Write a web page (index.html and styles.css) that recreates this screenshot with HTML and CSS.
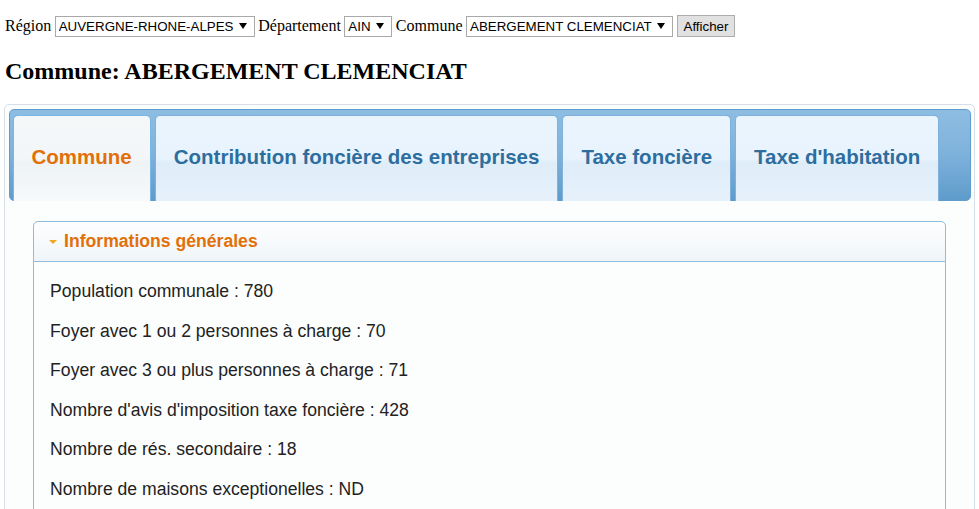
FILE: index.html
```html
<!DOCTYPE html>
<html lang="fr">
<head>
    <meta charset="UTF-8">
    <title>Fiscalité locale - Commune</title>
    <link rel="stylesheet" href="styles.css">
</head>
<body>

    <form class="filters">
        <label for="region">Région</label>
        <select id="region"><option>AUVERGNE-RHONE-ALPES</option></select>
        <label for="dep">Département</label>
        <select id="dep"><option>AIN</option></select>
        <label for="commune">Commune</label>
        <select id="commune"><option>ABERGEMENT CLEMENCIAT</option></select>
        <button type="button">Afficher</button>
    </form>

    <h2>Commune: ABERGEMENT CLEMENCIAT</h2>

    <div class="tabs">
        <ul class="tabs-nav">
            <li class="tab active"><a href="#commune">Commune</a></li>
            <li class="tab"><a href="#cfe">Contribution foncière des entreprises</a></li>
            <li class="tab"><a href="#tf">Taxe foncière</a></li>
            <li class="tab"><a href="#th">Taxe d'habitation</a></li>
        </ul>

        <div class="tab-panel" id="commune">
            <div class="accordion">
                <h3 class="acc-header"><span class="acc-icon"></span>Informations générales</h3>
                <div class="acc-content">
                    <p>Population communale : 780</p>
                    <p>Foyer avec 1 ou 2 personnes à charge : 70</p>
                    <p>Foyer avec 3 ou plus personnes à charge : 71</p>
                    <p>Nombre d'avis d'imposition taxe foncière : 428</p>
                    <p>Nombre de rés. secondaire : 18</p>
                    <p>Nombre de maisons exceptionelles : ND</p>
                </div>
            </div>
        </div>
    </div>

</body>
</html>
```

FILE: styles.css
```css
body {
    margin: 4px;
    font-family: "Liberation Serif", "Times New Roman", serif;
    font-size: 16px;
    color: #000;
    background: #fff;
}
.filters {
    margin: 11px 0 0 1px;
    height: 22px;
    display: flex;
    align-items: center;
    gap: 3.5px;
}
.filters select {
    appearance: none;
    -webkit-appearance: none;
    font-family: "Liberation Sans", Arial, sans-serif;
    font-size: 13.33px;
    color: #000;
    height: 21px;
    padding: 0 20px 0 3px;
    border: 1px solid #a9a9a9;
    border-radius: 0;
    background: #fff url("data:image/svg+xml;utf8,<svg xmlns='http://www.w3.org/2000/svg' width='8' height='6'><path d='M0 0h8L4 6z' fill='black'/></svg>") no-repeat right 7px center;
}
.filters button {
    font-family: "Liberation Sans", Arial, sans-serif;
    font-size: 13.33px;
    height: 22px;
    padding: 0 6px;
    background: #e1e1e1;
    border: 1px solid #adadad;
    color: #000;
}
h2 {
    font-size: 24px;
    margin: 20px 0 19px 1px;
    line-height: 28px;
}
.tabs {
    font-family: "Liberation Sans", Arial, sans-serif;
    font-size: 17.6px;
    border: 1px solid #d6dfe6;
    border-radius: 5px;
    padding: 3.5px;
    background: #fcfdfd;
}
.tabs-nav {
    list-style: none;
    margin: 0;
    padding: 5px 3px 0;
    display: flex;
    gap: 4px;
    border: 1px solid #5f9dce;
    border-radius: 5px;
    background: linear-gradient(#8ebde2, #80b3dc 45%, #5f9ccb);
}
.tab {
    margin-bottom: -1px;
    border: 1px solid #7eb2dc;
    border-bottom: 0;
    border-radius: 5px 5px 0 0;
    background: linear-gradient(#eaf4fd, #e8f3fd 50%, #dfedf9 55%, #e6f1fb);
}
.tab a {
    display: block;
    padding: 0 18px;
    height: 84px;
    line-height: 82px;
    font-size: 20.5px;
    font-weight: bold;
    color: #2e6e9e;
    text-decoration: none;
}
.tab.active {
    border-color: #79b7e7;
    background: linear-gradient(#f5f8f9, #f3f6f8 50%, #eef3f6 55%, #f7f9fb);
}
.tab.active a {
    color: #e17009;
    height: 85px;
}
.tab-panel {
    padding: 17.6px 24.6px;
    background: #fcfdfd;
}
.accordion {
    margin-top: 3px;
}
.acc-header {
    margin: 0;
    display: flex;
    align-items: center;
    height: 39px;
    padding-left: 15px;
    font-size: 17.6px;
    font-weight: bold;
    color: #e17009;
    border: 1px solid #8fbbdd;
    border-radius: 5px 5px 0 0;
    background: linear-gradient(#fdfefe, #f6f9fb 60%, #eef4f8);
}
.acc-icon {
    width: 0;
    height: 0;
    margin-right: 7px;
    border-left: 4px solid transparent;
    border-right: 4px solid transparent;
    border-top: 4px solid #f0a820;
}
.acc-content {
    border: 1px solid #8fbbdd;
    border-top: 0;
    padding: 18px 16px 0;
    height: 300px;
    color: #222;
    background: #fcfdfd;
}
.acc-content p {
    margin: 0 0 17.6px;
    line-height: 22px;
}
```
